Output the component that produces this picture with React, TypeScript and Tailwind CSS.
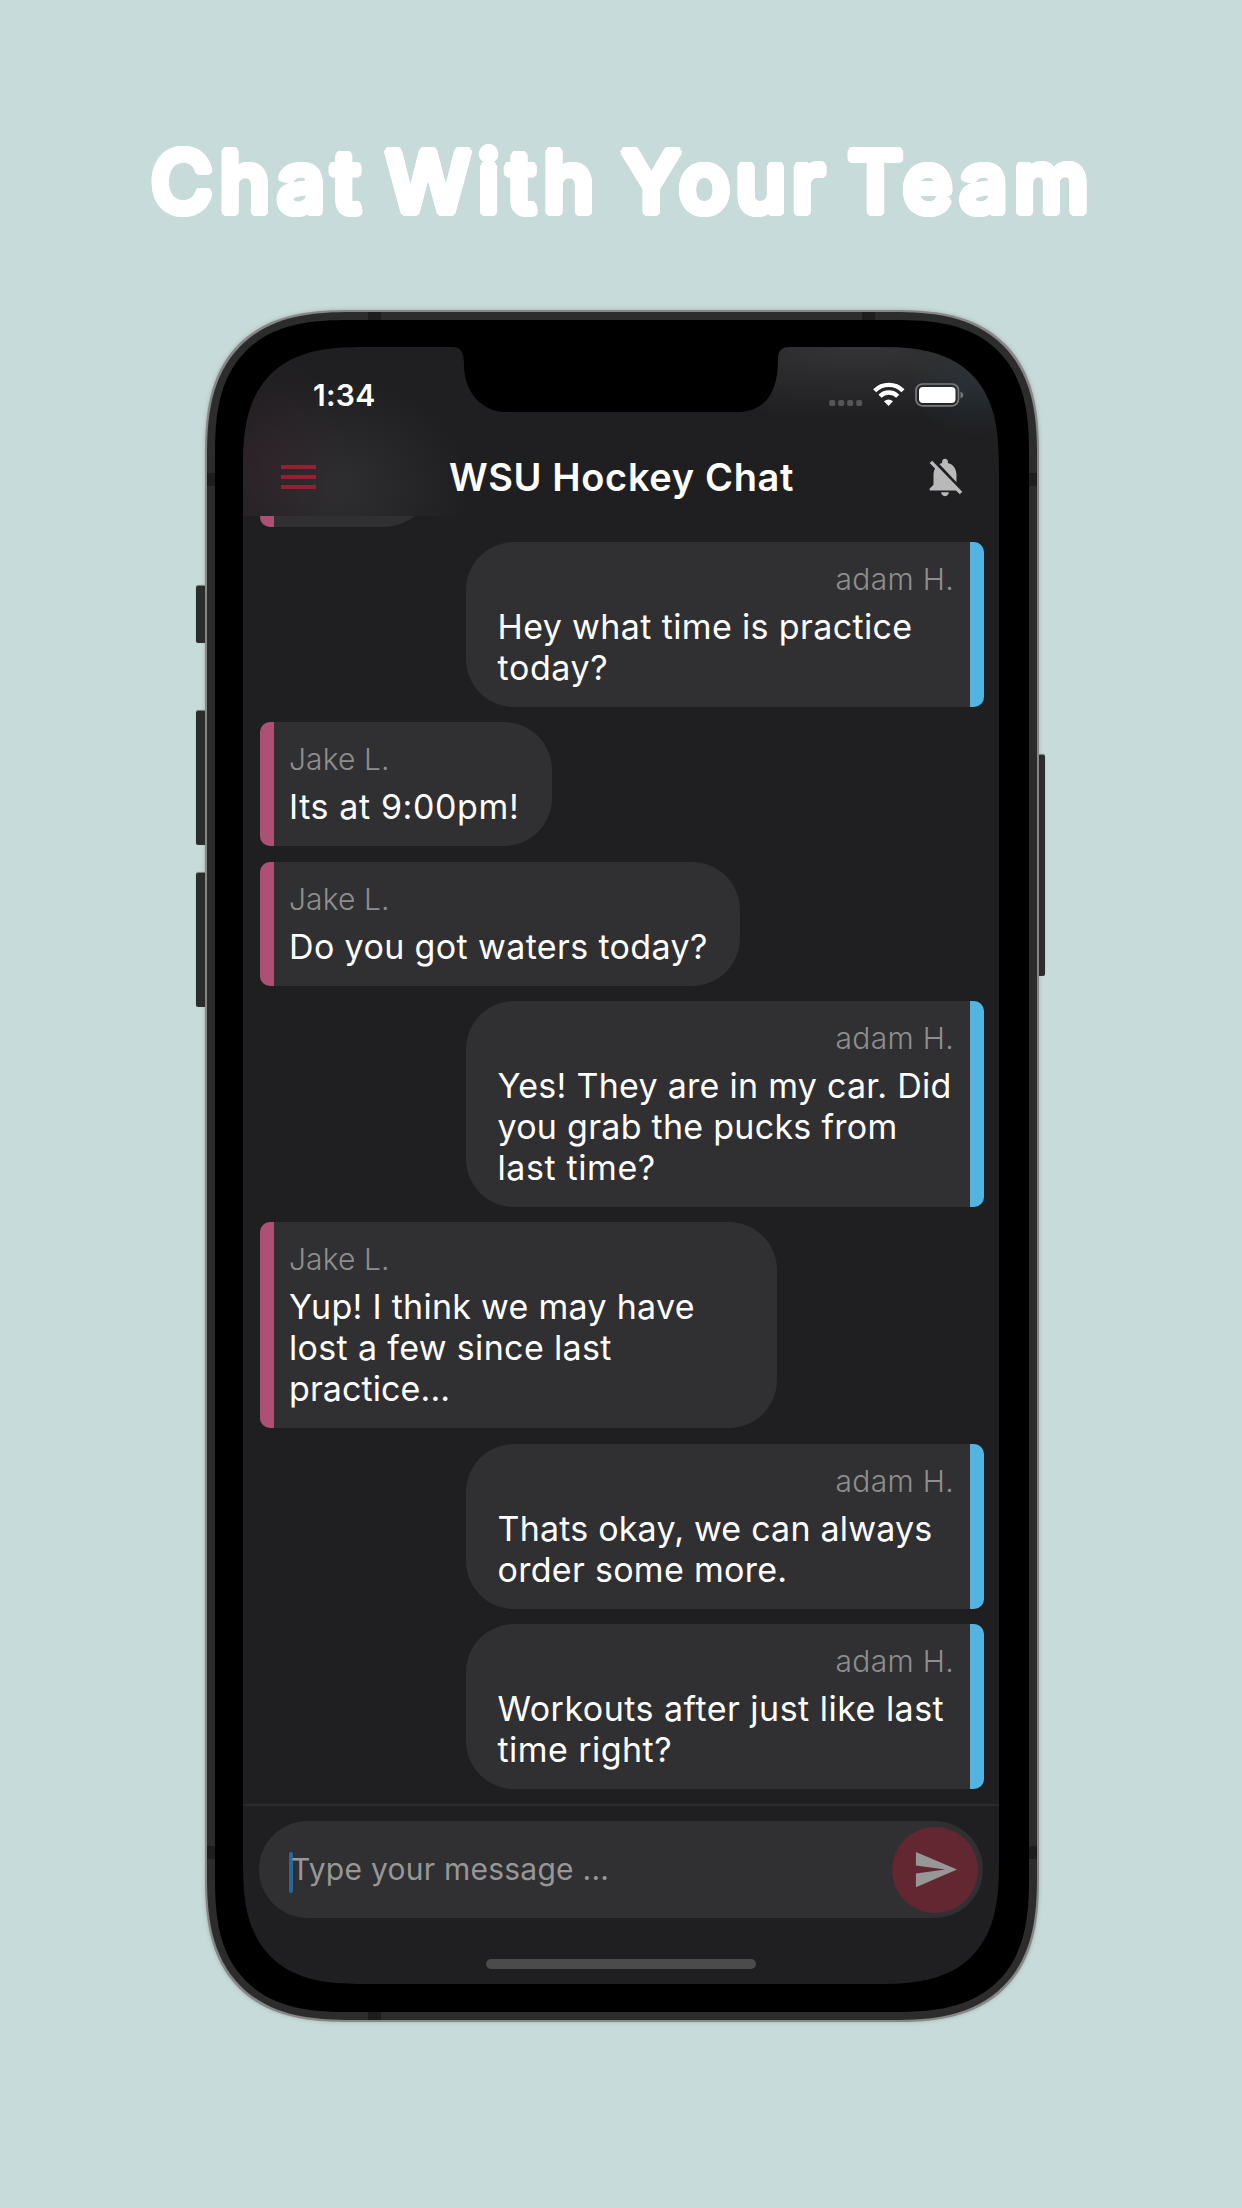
import { MdNotificationsOff, MdSend } from "react-icons/md";

type Line = [text: string, tracking: string];
type Message = { mine: boolean; lines: Line[]; size: string };

const messages: Message[] = [
  {
    mine: true,
    lines: [["Hey what time is practice", "tracking-[0.37px]"], ["today?", "tracking-[0.6px]"]],
    size: "w-[518px] h-[165px]",
  },
  { mine: false, lines: [["Its at 9:00pm!", "tracking-[0.6px]"]], size: "w-[292px] h-[124px]" },
  { mine: false, lines: [["Do you got waters today?", "tracking-[0.37px]"]], size: "w-[480px] h-[124px]" },
  {
    mine: true,
    lines: [
      ["Yes! They are in my car. Did", "tracking-[0.27px]"],
      ["you grab the pucks from", "tracking-[0.27px]"],
      ["last time?", "tracking-[0.6px]"],
    ],
    size: "w-[518px] h-[206px]",
  },
  {
    mine: false,
    lines: [
      ["Yup! I think we may have", "tracking-[0.28px]"],
      ["lost a few since last", "tracking-[0.34px]"],
      ["practice...", "tracking-[0.1px]"],
    ],
    size: "w-[517px] h-[206px]",
  },
  {
    mine: true,
    lines: [["Thats okay, we can always", "tracking-[0.2px]"], ["order some more.", "tracking-[0.3px]"]],
    size: "w-[518px] h-[165px]",
  },
  {
    mine: true,
    lines: [["Workouts after just like last", "tracking-[0.48px]"], ["time right?", "tracking-[0.45px]"]],
    size: "w-[518px] h-[165px]",
  },
];

function Bubble({ mine, lines, size }: Message) {
  return (
    <div
      className={`shrink-0 overflow-hidden bg-[#303032] ${size} ${
        mine ? "self-end rounded-l-[48px] rounded-r-[10px]" : "self-start rounded-l-[10px] rounded-r-[48px]"
      }`}
    >
      <div
        className={`h-full pt-[18px] ${
          mine ? "border-r-[14px] border-[#54b3e1] pr-[16px] pl-[31.5px]" : "border-l-[14px] border-[#ae4f75] pl-[15px]"
        }`}
      >
        <p
          className={`h-[46px] text-[30px] leading-[39px] font-light text-[#8e8e8f] ${
            mine ? "text-right tracking-[0.3px]" : "tracking-[0.1px]"
          }`}
        >
          {mine ? "adam H." : "Jake L."}
        </p>
        {lines.map(([text, tracking]) => (
          <p key={text} className={`text-[34px] leading-[41px] whitespace-nowrap text-white ${tracking}`}>
            {text}
          </p>
        ))}
      </div>
    </div>
  );
}

function Notch() {
  return (
    <svg className="absolute -top-px left-[208px]" width="340" height="67" viewBox="0 0 340 67">
      <path d="M0 0H340V1H339C331 1 327 4 327 13C327 45 316 66 285 66H55C30 66 13 45 13 19C13 6 10 1 1 1H0Z" fill="#000" />
    </svg>
  );
}

function StatusIcons() {
  return (
    <svg width="136" height="26" viewBox="0 0 136 26">
      {[0, 9, 18, 27].map((x) => (
        <rect key={x} x={x + 0.2} y="18" width="6" height="6" rx="1.8" fill="#555557" />
      ))}
      <g fill="none" stroke="#fff" strokeWidth="4.3">
        <path d="M45.7 8.7A20 20 0 0 1 74 8.7" />
        <path d="M51 14.2A12.4 12.4 0 0 1 68.7 14.2" />
      </g>
      <path d="M55 19.2Q59.5 15.6 64 19.2L59.5 24Z" fill="#fff" />
      <rect x="87" y="2" width="42.5" height="21.8" rx="6.5" fill="none" stroke="#7a7a7b" strokeWidth="1.7" />
      <rect x="90" y="5" width="36.5" height="16" rx="4" fill="#fff" />
      <path d="M131.5 9.5Q134.3 10.5 134.3 13Q134.3 15.5 131.5 16.5Z" fill="#7a7a7b" />
    </svg>
  );
}

export default function App() {
  return (
    <div className="flex h-[2208px] w-[1242px] flex-col items-center overflow-hidden bg-[#c7dbda] font-['Inter','Liberation_Sans',sans-serif]">
      <h1 className="flex h-[312px] w-full shrink-0 pt-[124px] pl-[151px] text-[84px] leading-[116px] font-medium whitespace-nowrap text-white [text-shadow:4px_0_0_#fff,-4px_0_0_#fff,0_4px_0_#fff,0_-4px_0_#fff,2.8px_2.8px_0_#fff,-2.8px_2.8px_0_#fff,2.8px_-2.8px_0_#fff,-2.8px_-2.8px_0_#fff,3.7px_1.5px_0_#fff,-3.7px_1.5px_0_#fff,3.7px_-1.5px_0_#fff,-3.7px_-1.5px_0_#fff,1.5px_3.7px_0_#fff,-1.5px_3.7px_0_#fff,1.5px_-3.7px_0_#fff,-1.5px_-3.7px_0_#fff]">
        <span className="w-[235px] tracking-[7px]">Chat</span>
        <span className="w-[236px] tracking-[7.8px]">With</span>
        <span className="w-[226px] tracking-[5.8px]">Your</span>
        <span className="tracking-[6.6px]">Team</span>
      </h1>

      <div className="relative ml-[2px] h-[1708px] w-[830px] rounded-[144px] bg-[#2c2c2c] p-[8px] shadow-[0_0_0_2px_#858887,0_0_4px_2px_#a3b3b2] [corner-shape:superellipse(1.375)]">
        <div className="absolute top-[274px] -left-[11px] h-[57px] w-[9px] rounded-l-[2px] bg-[#2c2c2c] shadow-[0_-1px_1px_#6c7676]" />
        <div className="absolute top-[399px] -left-[11px] h-[134px] w-[9px] rounded-l-[2px] bg-[#2c2c2c] shadow-[0_-1px_1px_#6c7676]" />
        <div className="absolute top-[561px] -left-[11px] h-[134px] w-[9px] rounded-l-[2px] bg-[#2c2c2c] shadow-[0_-1px_1px_#6c7676]" />
        <div className="absolute top-[443px] -right-[8px] h-[221px] w-[6px] rounded-r-[2px] bg-[#2c2c2c] shadow-[0_-1px_1px_#6c7676]" />
        <div className="absolute top-0 left-[161px] h-[8px] w-[13px] bg-[#1d1d1d]" />
        <div className="absolute top-0 right-[162px] h-[8px] w-[13px] bg-[#1d1d1d]" />
        <div className="absolute bottom-0 left-[161px] h-[8px] w-[13px] bg-[#1d1d1d]" />
        <div className="absolute top-[161px] left-0 h-[13px] w-[8px] bg-[#1d1d1d]" />
        <div className="absolute top-[161px] right-0 h-[13px] w-[8px] bg-[#1d1d1d]" />
        <div className="absolute bottom-[161px] left-0 h-[13px] w-[8px] bg-[#1d1d1d]" />
        <div className="absolute right-0 bottom-[161px] h-[13px] w-[8px] bg-[#1d1d1d]" />

        <div className="h-full w-full rounded-[134px] bg-black pt-[27px] pl-[28px] [corner-shape:superellipse(1.4)]">
          <div className="relative flex h-[1637px] w-[756px] flex-col overflow-hidden rounded-[122px] bg-[#1f1f21] [corner-shape:superellipse(1.44)]">
            <header className="flex h-[169px] shrink-0 flex-col bg-[radial-gradient(ellipse_80px_110px_at_22px_115px,rgba(60,35,46,0.4),transparent),radial-gradient(ellipse_130px_110px_at_95px_140px,#2d2d2f_10%,transparent),radial-gradient(ellipse_300px_70px_at_620px_0px,#343436,transparent),radial-gradient(ellipse_70px_70px_at_730px_20px,#233038,transparent)]">
              <div className="flex h-[96px] items-start justify-between pt-[30px] pr-[34px] pl-[70px]">
                <span className="text-[30px] leading-[36px] font-semibold tracking-[0.3px] text-white">1:34</span>
                <span className="pt-[5px]">
                  <StatusIcons />
                </span>
              </div>
              <div className="flex h-[68px] items-center justify-between pr-[31px] pl-[38px]">
                <div className="flex w-[35px] flex-col gap-[6px]">
                  <i className="h-[4px] bg-[#991d33]" />
                  <i className="h-[4px] bg-[#991d33]" />
                  <i className="h-[4px] bg-[#991d33]" />
                </div>
                <h2 className="ml-[5px] text-[38px] leading-[46px] font-semibold tracking-[0.65px] text-white">WSU Hockey Chat</h2>
                <MdNotificationsOff className="size-[46px] text-[#b9b9b9]" />
              </div>
            </header>
            <Notch />

            <main className="flex h-[1288px] shrink-0 flex-col gap-[15.4px] pr-[15px] pl-[17px]">
              <div className="h-[10.5px] shrink-0 overflow-hidden">
                <div className="-mt-[113px] h-[124px] w-[172px] overflow-hidden rounded-l-[10px] rounded-r-[48px] bg-[#303032]">
                  <div className="h-full w-[14px] bg-[#ae4f75]" />
                </div>
              </div>
              {messages.map((m) => (
                <Bubble key={m.lines[0][0]} {...m} />
              ))}
            </main>

            <footer className="flex flex-1 flex-col items-center border-t-2 border-[#2a2a2d] pt-[15px]">
              <div className="flex h-[97px] w-[724px] items-center justify-between rounded-full bg-[#303032] pr-[5px] pl-[30px]">
                <div className="flex items-center">
                  <i className="mt-[6px] h-[41px] w-[4px] rounded-full bg-[#28699d]" />
                  <span className="-ml-[2px] text-[30px] tracking-[0.25px] text-[#979798]">Type your message ...</span>
                </div>
                <div className="flex size-[86px] items-center justify-center rounded-full bg-[#632731]">
                  <MdSend className="size-[47px] text-[#979797]" />
                </div>
              </div>
              <div className="mt-[41px] h-[10px] w-[270px] rounded-full bg-[#4b4b4b]" />
            </footer>
          </div>
        </div>
      </div>
    </div>
  );
}
